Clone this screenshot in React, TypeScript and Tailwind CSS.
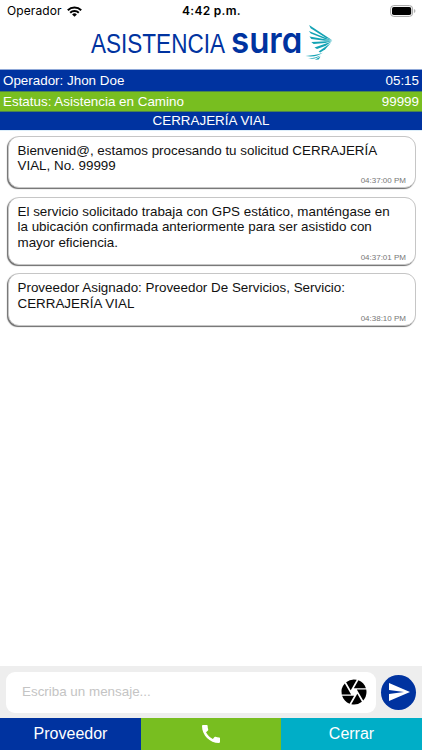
import { MdCall, MdCamera, MdSend } from "react-icons/md";

const messages = [
  {
    lines: ["Bienvenid@, estamos procesando tu solicitud CERRAJERÍA", "VIAL, No. 99999"],
    time: "04:37:00 PM",
  },
  {
    lines: [
      "El servicio solicitado trabaja con GPS estático, manténgase en",
      "la ubicación confirmada anteriormente para ser asistido con",
      "mayor eficiencia.",
    ],
    time: "04:37:01 PM",
  },
  {
    lines: ["Proveedor Asignado: Proveedor De Servicios, Servicio:", "CERRAJERÍA VIAL"],
    time: "04:38:10 PM",
  },
];

function StatusBar() {
  return (
    <div className="grid h-[22px] grid-cols-3 items-center pl-[7px] pr-[6px] font-['Inter',sans-serif] text-[12px] leading-none text-black">
      <div className="flex items-center gap-[5px]">
        <span className="tracking-[0.1px]">Operador</span>
        <svg width="15" height="11" viewBox="0 0 15 11" fill="none" stroke="currentColor" strokeWidth="2">
          <path d="M0.8 4.2a9.6 9.6 0 0 1 13.4 0" />
          <path d="M3.2 6.7a6.1 6.1 0 0 1 8.6 0" />
          <path d="M7.5 10.8 5.1 8.4a3.5 3.5 0 0 1 4.8 0z" fill="currentColor" stroke="none" />
        </svg>
      </div>
      <span className="text-center font-semibold tracking-[0.3px]">4:42 p.m.</span>
      <svg className="justify-self-end" width="26" height="12" viewBox="0 0 26 12">
        <rect x="0.6" y="0.6" width="22" height="10.8" rx="3.2" fill="none" stroke="#a3a3a3" />
        <rect x="2" y="2" width="19.2" height="8" rx="1.8" fill="#000" />
        <path d="M24.2 4v4c1.6-.6 1.6-3.4 0-4z" fill="#a3a3a3" />
      </svg>
    </div>
  );
}

function Logo() {
  return (
    <svg className="mx-auto block overflow-visible" width="246" height="47" viewBox="89 22 246 47">
      <text
        transform="translate(92 53) scale(0.805 1)"
        fill="#0033a0"
        fontSize="28"
        className="font-['Liberation_Sans',sans-serif]"
      >
        ASISTENCIA
      </text>
      <text
        transform="translate(232 52.5) scale(0.93 1)"
        fill="#0033a0"
        fontSize="35.5"
        fontWeight="600"
        className="font-['Inter',sans-serif] [font-feature-settings:'cv11']"
      >
        sura
      </text>
      <g fill="#14a3b4" transform="translate(0.8 0)">
        <path d="M309.3 25 332.5 40.2 325 37.2 310.8 28.2z" />
        <path d="M309 31 332.5 40.4 325 38.9 311 33.6z" />
        <path d="M309.7 36.6 332.5 40.6 325 40.8 311.5 38.9z" />
        <path d="M311.5 42 332.3 40.9 325.5 43 313.8 44z" />
        <path d="M314.7 47.4 331.8 41.6 326 45.7 317.2 49z" />
        <path d="M318.8 51.6 331 43 325.5 49.3 320.4 52.6z" />
        <path d="M305.7 56.1c6-.9 11-.8 17.2-3.4-4 3.2-9.7 4.5-17.2 3.4z" />
        <path d="M308.2 58.3c5 .3 8.5-1.2 12.6-2.8-2.9 2.6-6.8 3.8-12.6 2.8z" />
        <path d="M315 59.7 320.8 56.5 318.8 59.4z" />
      </g>
    </svg>
  );
}

function Message({ lines, time }: { lines: string[]; time: string }) {
  return (
    <div className="rounded-[11px] border border-[#c6c6c6] bg-white pl-[8.5px] pr-[9px] pt-[6px] shadow-[-1px_1px_1px_#6b6b6b]">
      <p className="whitespace-nowrap text-[13.4px] leading-[15.7px] text-[#111]">
        {lines.map((line) => (
          <span key={line} className="block">
            {line}
          </span>
        ))}
      </p>
      <p className="pt-[1.3px] text-right text-[8px] leading-[12px] text-[#777]">{time}</p>
    </div>
  );
}

export default function App() {
  return (
    <div className="flex h-[750px] w-[422px] flex-col overflow-hidden bg-white font-['Liberation_Sans',Arial,sans-serif]">
      <header className="h-[69px] shrink-0">
        <StatusBar />
        <Logo />
      </header>

      <div className="shrink-0 border-t border-[#8fa8d8] text-[13.4px] text-white">
        <div className="flex h-[21px] items-center justify-between bg-[#0033a0] px-[3px] pt-px">
          <span>Operador: Jhon Doe</span>
          <span>05:15</span>
        </div>
        <div className="flex h-[21px] items-center justify-between border-y border-[#4b8350] bg-[#78be20] px-[3px] pt-px">
          <span>Estatus: Asistencia en Camino</span>
          <span>99999</span>
        </div>
        <div className="flex h-[18px] items-center justify-center bg-[#0033a0]">CERRAJERÍA VIAL</div>
      </div>

      <main className="flex flex-1 flex-col gap-[8.4px] border-t border-[#dceefa] pl-[8px] pr-[6px] pt-[4.5px]">
        {messages.map((message) => (
          <Message key={message.time} {...message} />
        ))}
      </main>

      <div className="flex h-[52px] shrink-0 items-center gap-[5px] bg-[#eeeeee] pl-[6px] pr-[6px]">
        <div className="flex h-[41px] w-[370px] items-center rounded-[9px] bg-white pl-[16px] pr-[7px]">
          <input
            className="min-w-0 flex-1 bg-transparent pt-px text-[13.4px] outline-none placeholder:text-[#c4c4c4]"
            placeholder="Escriba un mensaje..."
          />
          <button type="button" aria-label="Cámara">
            <MdCamera size={30} color="#000" />
          </button>
        </div>
        <button
          type="button"
          aria-label="Enviar"
          className="flex size-[35px] items-center justify-center rounded-full bg-[#0033a0]"
        >
          <MdSend size={24} color="#fff" />
        </button>
      </div>

      <nav className="grid h-[32px] shrink-0 grid-cols-[141px_140px_141px] text-[16px] text-white">
        <button type="button" className="bg-[#0033a0]">
          Proveedor
        </button>
        <button type="button" aria-label="Llamar" className="flex items-center justify-center bg-[#78be20]">
          <MdCall size={24} />
        </button>
        <button type="button" className="bg-[#00aec7]">
          Cerrar
        </button>
      </nav>
    </div>
  );
}
